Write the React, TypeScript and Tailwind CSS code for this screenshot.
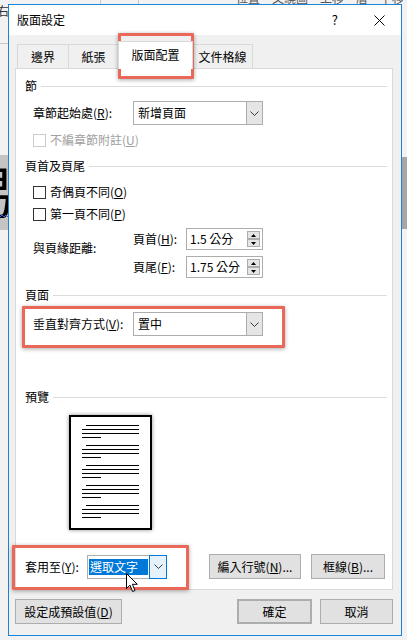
import React from "react";

const Chevron = () => (
  <svg width="9" height="5" viewBox="0 0 9 5">
    <path d="M0.5 0.5 L4.5 4.5 L8.5 0.5" fill="none" stroke="#3c3c3c" strokeWidth="1" />
  </svg>
);

function Heading({ label, className }: { label: string; className: string }) {
  return (
    <div className={"flex h-[16px] items-center gap-[4px] " + className}>
      <span>{label}</span>
      <div className="h-px flex-1 bg-[#dcdcdc]" />
    </div>
  );
}

function Select({ value, className }: { value: string; className: string }) {
  return (
    <div className={"flex h-[24px] items-stretch border border-[#adadad] bg-white " + className}>
      <div className="flex flex-1 items-center pl-[4px]">{value}</div>
      <div className="flex w-[16px] items-center justify-center border-l border-[#adadad] bg-[#e5e5e5]">
        <Chevron />
      </div>
    </div>
  );
}

function Check({ children, disabled }: { children: React.ReactNode; disabled?: boolean }) {
  return (
    <div className="flex h-[14px] items-center gap-[4px] pl-[8px]">
      <div
        className={
          disabled
            ? "h-[13px] w-[13px] border border-[#cccccc] bg-white"
            : "h-[13px] w-[13px] border border-[#333333] bg-white"
        }
      />
      <span className={disabled ? "text-[#a0a0a0]" : "text-black"}>{children}</span>
    </div>
  );
}

function SpinBtn({ up }: { up?: boolean }) {
  return (
    <div className="flex h-[8px] w-[13px] items-center justify-center border border-[#adadad] bg-[#e5e5e5]">
      <svg width="5" height="3" viewBox="0 0 5 3">
        {up ? <path d="M0 3 L2.5 0 L5 3 Z" fill="#000" /> : <path d="M0 0 L2.5 3 L5 0 Z" fill="#000" />}
      </svg>
    </div>
  );
}

function Spin({ value }: { value: string }) {
  return (
    <div className="flex h-[22px] w-[77px] items-center border border-[#adadad] bg-white pl-[3px] pr-[2px]">
      <span className="flex-1">{value}</span>
      <div className="flex flex-col">
        <SpinBtn up />
        <SpinBtn />
      </div>
    </div>
  );
}

function Btn({ children, className }: { children: React.ReactNode; className: string }) {
  return (
    <div className={"flex h-[25px] items-center justify-center border border-[#adadad] bg-[#e1e1e1] " + className}>
      {children}
    </div>
  );
}

const Line = ({ className }: { className: string }) => <div className={"h-px bg-black " + className} />;

function Para() {
  return (
    <div className="flex flex-col gap-[3px]">
      <Line className="ml-[4px] w-[53px]" />
      <Line className="w-[57px]" />
      <Line className="w-[57px]" />
      <Line className="w-[19px]" />
    </div>
  );
}

export default function App() {
  return (
    <div className="relative h-[640px] w-[407px] overflow-hidden bg-[#f2f2f2] font-['Noto_Sans_CJK_TC','Noto_Sans',sans-serif] text-[12px] leading-[16px] text-black">
      {/* background Word window */}
      <div className="absolute left-[236px] top-[-10px] whitespace-nowrap text-[#555555]">位置　文繞圖　上移一層　下移一層</div>
      <div className="absolute left-[100px] top-0 h-[4px] w-px bg-[#c8c8c8]" />
      <div className="absolute left-[138px] top-0 h-[4px] w-px bg-[#c8c8c8]" />
      <div className="absolute left-[-3px] top-[3px] text-[#333333]">右</div>
      <div className="absolute left-0 top-[43px] h-px w-[8px] bg-[#c8c8c8]" />
      <div className="absolute left-0 top-[155px] h-[75px] w-[8px] overflow-hidden bg-[#c4c4c4]">
        <div className="absolute left-[-40px] top-[2px] text-[56px] leading-[64px] text-black">易</div>
      </div>
      <svg className="absolute left-0 top-[214px]" width="8" height="4" viewBox="0 0 8 4">
        <path d="M0 3 L2 1 L4 3 L6 1 L8 3" fill="none" stroke="#3b5bdb" strokeWidth="1" />
      </svg>
      <div className="absolute left-[402px] top-[157px] h-[72px] w-[5px] bg-[#a6a6a6]" />

      {/* dialog */}
      <div className="absolute left-[8px] top-[4px] flex h-[632px] w-[394px] flex-col border border-[#1883d7] bg-[#f0f0f0]">
        <div className="flex h-[30px] items-center bg-white pl-[8px] pr-[16px]">
          <span>版面設定</span>
          <span className="ml-auto text-[13px]">?</span>
          <svg className="ml-[36px]" width="11" height="11" viewBox="0 0 11 11">
            <path d="M0.5 0.5 L10.5 10.5 M10.5 0.5 L0.5 10.5" stroke="#000" strokeWidth="1" />
          </svg>
        </div>

        <div className="flex flex-col pl-[6px]">
          {/* tabs */}
          <div className="flex h-[33px] items-end pl-[2px]">
            <div className="flex h-[24px] w-[52px] items-center justify-center border-l border-r border-t border-[#d9d9d9] bg-[#f0f0f0]">邊界</div>
            <div className="-ml-px flex h-[24px] w-[51px] items-center justify-center border-l border-r border-t border-[#d9d9d9] bg-[#f0f0f0]">紙張</div>
            <div className="relative z-10 -mb-px -ml-px flex h-[28px] w-[75px] items-center justify-center border-l border-r border-t border-[#d9d9d9] bg-white pb-[2px]">版面配置</div>
            <div className="-ml-px flex h-[24px] w-[61px] items-center justify-center border-l border-r border-t border-[#d9d9d9] bg-[#f0f0f0]">文件格線</div>
          </div>

          {/* panel */}
          <div className="flex h-[522px] w-[378px] flex-col border border-[#d9d9d9] bg-white pl-[9px] pr-[5px]">
            <Heading label="節" className="mt-[9px]" />
            <div className="mt-[7px] flex h-[24px] items-center pl-[8px]">
              <span className="w-[100px]">
                章節起始處(<u>R</u>):
              </span>
              <Select value="新增頁面" className="w-[130px]" />
            </div>
            <div className="mt-[8px]">
              <Check disabled>
                不編章節附註(<u>U</u>)
              </Check>
            </div>

            <Heading label="頁首及頁尾" className="mt-[11px]" />
            <div className="mt-[11px]">
              <Check>
                奇偶頁不同(<u>O</u>)
              </Check>
            </div>
            <div className="mt-[8px]">
              <Check>
                第一頁不同(<u>P</u>)
              </Check>
            </div>
            <div className="mt-[7px] flex items-start pl-[8px]">
              <span className="mt-[12px] w-[100px]">與頁緣距離:</span>
              <div className="flex flex-col gap-[6px]">
                <div className="flex h-[22px] items-center">
                  <span className="w-[53px]">
                    頁首(<u>H</u>):
                  </span>
                  <Spin value="1.5 公分" />
                </div>
                <div className="flex h-[22px] items-center">
                  <span className="w-[53px]">
                    頁尾(<u>F</u>):
                  </span>
                  <Spin value="1.75 公分" />
                </div>
              </div>
            </div>

            <Heading label="頁面" className="mt-[9px]" />
            <div className="mt-[9px] flex h-[24px] items-center pl-[8px]">
              <span className="w-[100px]">
                垂直對齊方式(<u>V</u>):
              </span>
              <Select value="置中" className="w-[130px]" />
            </div>

            <Heading label="預覽" className="mt-[53px]" />
            <div className="ml-[44px] mt-[10px] flex h-[115px] w-[83px] flex-col gap-[7px] border-2 border-black bg-white pl-[11px] pt-[8px] shadow-[0_0_4px_rgba(0,0,0,0.45)]">
              <Para />
              <Para />
              <Para />
              <Para />
              <Para />
            </div>

            <div className="mt-[24px] flex h-[25px] items-center">
              <span className="w-[62px]">
                套用至(<u>Y</u>):
              </span>
              <div className="flex h-[24px] w-[80px] items-stretch border border-[#adadad] bg-white">
                <div className="flex flex-1 items-center py-[2px] pl-[1px] pr-[1px]">
                  <span className="flex h-[16px] w-[59px] items-center bg-[#0078d7] pl-[1px] text-white">選取文字</span>
                </div>
                <div className="-my-px -mr-px flex w-[18px] items-center justify-center border border-[#0078d7] bg-[#e5f1fb]">
                  <Chevron />
                </div>
              </div>
              <Btn className="ml-[42px] w-[92px]">
                編入行號(<u>N</u>)...
              </Btn>
              <Btn className="ml-[10px] w-[74px]">
                框線(<u>B</u>)...
              </Btn>
            </div>
          </div>

          {/* bottom buttons */}
          <div className="mt-[9px] flex w-[378px] items-center">
            <Btn className="w-[107px]">
              設定成預設值(<u>D</u>)
            </Btn>
            <Btn className="ml-auto w-[75px] border-2 border-[#0078d7]">確定</Btn>
            <Btn className="ml-[8px] w-[73px]">取消</Btn>
          </div>
        </div>
      </div>

      {/* annotation boxes */}
      <div className="absolute left-[118px] top-[33px] h-[46px] w-[76px] rounded-[1px] border-[3px] border-[#e9685a] shadow-[0_1px_4px_rgba(0,0,0,0.35)]" />
      <div className="absolute left-[22px] top-[306px] h-[42px] w-[263px] rounded-[1px] border-[3px] border-[#e9685a] shadow-[0_1px_4px_rgba(0,0,0,0.35)]" />
      <div className="absolute left-[12px] top-[545px] h-[45px] w-[177px] rounded-[1px] border-[3px] border-[#e9685a] shadow-[0_1px_4px_rgba(0,0,0,0.35)]" />

      {/* mouse cursor */}
      <svg className="absolute left-[126px] top-[573px]" width="13" height="20" viewBox="0 0 13 20">
        <path d="M0.5 0.5 L0.5 15.5 L4 12.2 L6.6 18.5 L9 17.5 L6.4 11.3 L11.3 11.3 Z" fill="#fff" stroke="#000" strokeWidth="1" strokeLinejoin="round" />
      </svg>
    </div>
  );
}
